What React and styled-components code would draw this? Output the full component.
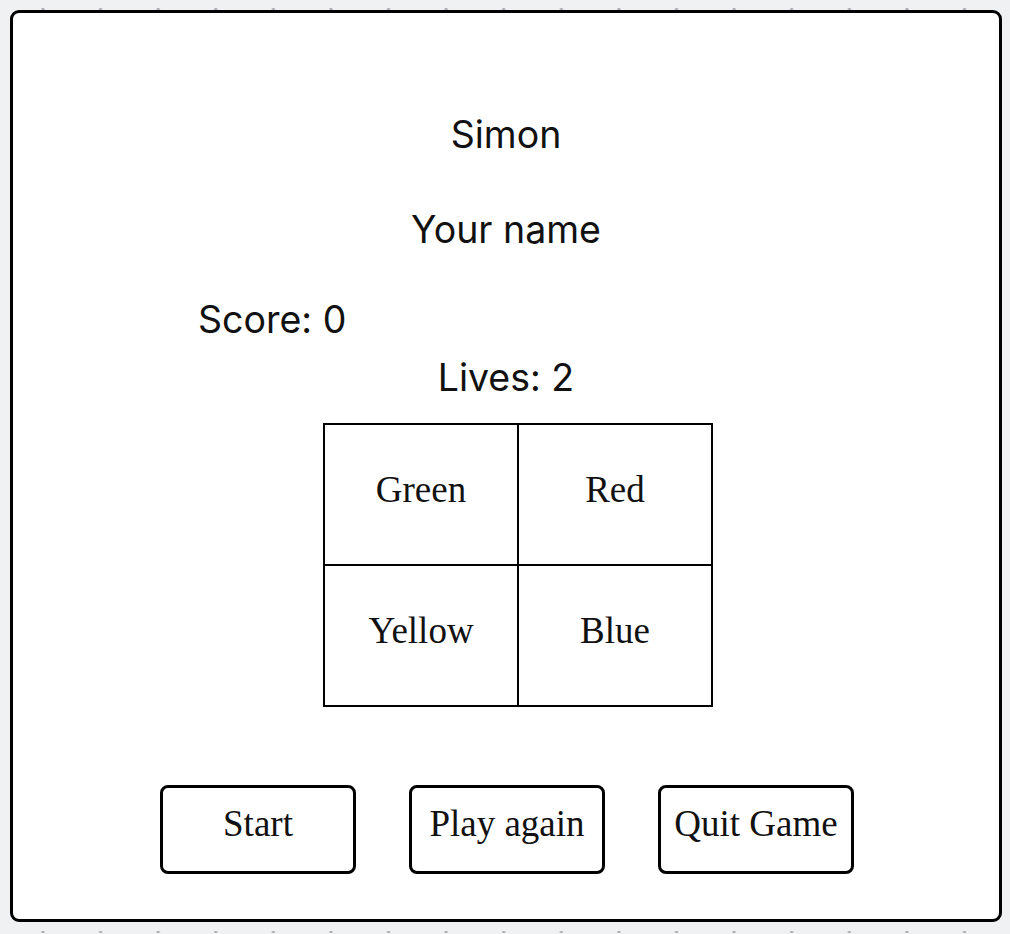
import React from 'react'
import styled, { createGlobalStyle } from 'styled-components'

const GlobalStyle = createGlobalStyle`
  * { box-sizing: border-box; }
  html, body {
    margin: 0;
    padding: 0;
    background-color: #f0f1f3;
    background-image: radial-gradient(ellipse 2px 1.3px at center, #a9abb0 60%, transparent 100%);
    background-size: 57.6px 57.7px;
    background-position: 14.2px -19.85px;
  }
`

const Page = styled.div`
  padding: 10px;
  min-height: 100vh;
`

const Card = styled.div`
  width: 992px;
  height: 912px;
  background: #ffffff;
  border: 3px solid #000;
  border-radius: 9px;
  display: flex;
  flex-direction: column;
  align-items: center;
  padding-top: 100px;
  color: #111;
`

const Line = styled.div`
  font-family: Inter, "Noto Sans", sans-serif;
  font-size: 37.5px;
  line-height: 44px;
  height: 44px;
  margin-top: ${p => p.$top || 0}px;
  align-self: ${p => (p.$left ? 'flex-start' : 'center')};
  margin-left: ${p => p.$left || 0}px;
`

const Board = styled.div`
  margin-top: 23px;
  margin-left: 24px;
  display: grid;
  grid-template-columns: 192px 192px;
  grid-template-rows: 139px 139px;
  gap: 2px;
  padding: 2px;
  background: #000;
`

const Cell = styled.div`
  background: #fff;
  display: flex;
  align-items: center;
  justify-content: center;
  padding-bottom: 10px;
  font-family: "Liberation Serif", "Times New Roman", serif;
  font-size: 37px;
  color: #111;
`

const Controls = styled.div`
  margin-top: 78px;
  display: flex;
  gap: 53px;
  padding-left: 2px;
`

const Button = styled.button`
  width: 196px;
  height: 89px;
  background: #fff;
  border: 3px solid #000;
  border-radius: 8px;
  padding: 0 0 12px;
  font-family: "Liberation Serif", "Times New Roman", serif;
  font-size: 37px;
  color: #111;
  cursor: pointer;
`

const colours = ['Green', 'Red', 'Yellow', 'Blue']

const App = () => {
  return (
    <>
      <GlobalStyle />
      <Page>
        <Card>
          <Line>Simon</Line>
          <Line $top={51}>Your name</Line>
          <Line $top={46} $left={185}>Score: 0</Line>
          <Line $top={14}>Lives: 2</Line>
          <Board>
            {colours.map(c => (
              <Cell key={c}>{c}</Cell>
            ))}
          </Board>
          <Controls>
            <Button>Start</Button>
            <Button>Play again</Button>
            <Button>Quit Game</Button>
          </Controls>
        </Card>
      </Page>
    </>
  )
}

export default App
